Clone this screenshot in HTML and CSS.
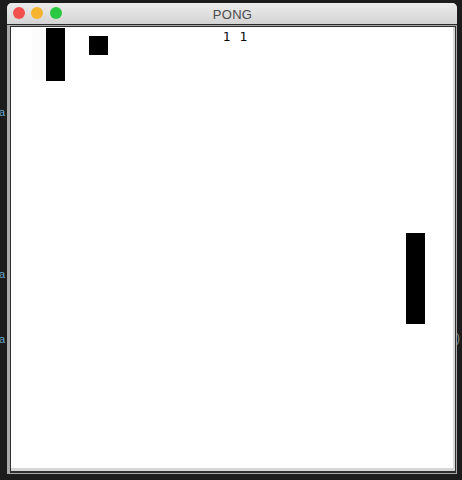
FILE: index.html
```html
<!DOCTYPE html>
<html>
<head>
<meta charset="utf-8">
<link rel="stylesheet" href="styles.css">
<title>PONG</title>
</head>
<body>
<div class="desk">
  <span class="bg-text t1">a</span>
  <span class="bg-text t2">a</span>
  <span class="bg-text t3">a</span>
  <span class="bg-text t4">)</span>
  <div class="window">
    <div class="titlebar">
      <div class="lights">
        <span class="light red"></span>
        <span class="light yellow"></span>
        <span class="light green"></span>
      </div>
      <div class="title">PONG</div>
    </div>
    <div class="frame">
      <div class="canvas">
        <div class="field">
          <div class="ghost"></div>
          <div class="paddle left"></div>
          <div class="ball"></div>
          <div class="score"><span>1</span><span>1</span></div>
          <div class="paddle right"></div>
        </div>
      </div>
    </div>
  </div>
</div>
</body>
</html>
```

FILE: styles.css
```css
html, body {
  margin: 0;
  padding: 0;
  background: #1c1c1c;
}
.desk {
  position: relative;
  width: 462px;
  height: 480px;
  padding: 3px 0 0 7px;
  box-sizing: border-box;
  font-family: "Liberation Sans", Arial, sans-serif;
}
.bg-text {
  position: absolute;
  font-size: 11px;
  line-height: 11px;
  color: #6aa7d2;
}
.t1 { left: -1px; top: 107px; }
.t2 { left: -1px; top: 269px; }
.t3 { left: -1px; top: 334px; }
.t4 { left: 456px; top: 333px; color: #8a8a8a; font-size: 12px; }
.window {
  position: relative;
  width: 450px;
  height: 471px;
  background: #b8b8b8;
  border-radius: 5px 5px 0 0;
  display: flex;
  flex-direction: column;
}
.titlebar {
  height: 21px;
  flex: none;
  position: relative;
  display: flex;
  align-items: center;
  justify-content: center;
  background: linear-gradient(#ececec, #d4d4d4);
  border-radius: 5px 5px 0 0;
}
.lights {
  position: absolute;
  left: 6px;
  top: 4px;
  display: flex;
  gap: 6.3px;
}
.light {
  width: 12px;
  height: 12px;
  border-radius: 50%;
  display: block;
}
.red { background: #f2514f; }
.yellow { background: #f6b431; }
.green { background: #2ac740; }
.title {
  font-size: 13px;
  color: #4b4b4b;
  letter-spacing: 0.3px;
  margin-left: 1px;
  margin-top: 1px;
}
.frame {
  flex: 1;
  border-top: 1px solid #2a2a2a;
  padding: 1px 1px 1px 3px;
  background: #a9a9a9;
  display: flex;
}
.canvas {
  flex: 1;
  border: 1px solid #2e2e2e;
  border-bottom-width: 2px;
  display: flex;
}
.field {
  flex: 1;
  position: relative;
  background: #ffffff;
  border-right: 2px solid #d9d9d9;
  border-bottom: 3px solid #d6d6d6;
}
.paddle, .ball, .ghost {
  position: absolute;
  background: #000;
}
.ghost {
  left: 21px;
  top: 1px;
  width: 14px;
  height: 52px;
  background: #fcfcfc;
}
.paddle.left {
  left: 35px;
  top: 1px;
  width: 19px;
  height: 53px;
}
.ball {
  left: 78px;
  top: 9px;
  width: 19px;
  height: 19px;
}
.paddle.right {
  left: 395px;
  top: 206px;
  width: 19px;
  height: 91px;
}
.score {
  position: absolute;
  left: 212px;
  top: 3px;
  font-family: "DejaVu Sans", sans-serif;
  font-size: 12px;
  line-height: 14px;
  color: #000;
  display: flex;
  gap: 9px;
}
```
